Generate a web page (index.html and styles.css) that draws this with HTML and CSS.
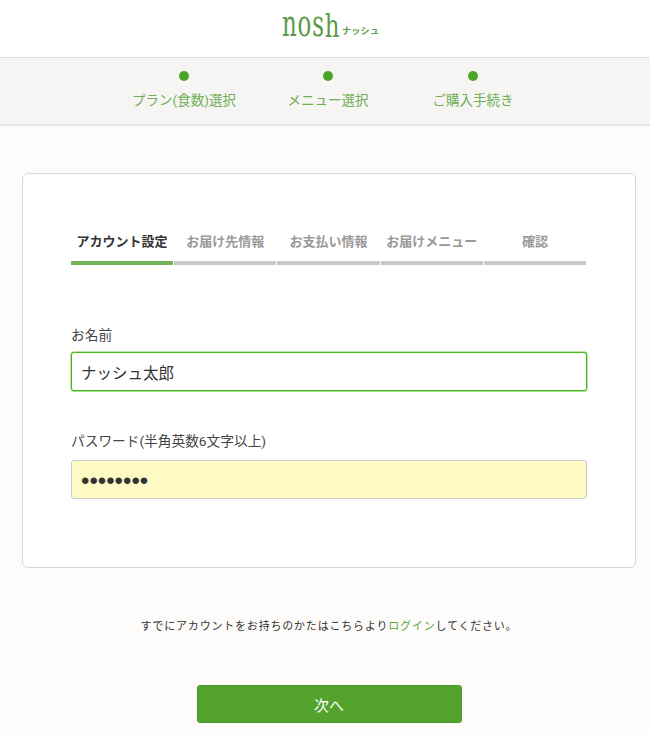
FILE: index.html
```html
<!DOCTYPE html>
<html lang="ja">
<head>
    <meta charset="utf-8">
    <title>nosh ナッシュ</title>
    <link rel="stylesheet" href="styles.css">
</head>
<body>
    <header class="site-header">
        <div class="logo">
            <span class="logo-word">nos<span class="logo-h">h</span></span>
            <span class="logo-kana">ナッシュ</span>
        </div>
    </header>

    <nav class="flow">
        <div class="flow-step flow-step-1"><span class="flow-dot"></span><span>プラン(食数)選択</span></div>
        <div class="flow-step flow-step-2"><span class="flow-dot"></span><span>メニュー選択</span></div>
        <div class="flow-step flow-step-3"><span class="flow-dot"></span><span>ご購入手続き</span></div>
    </nav>

    <main class="content">
        <section class="card">
            <ul class="tabs">
                <li class="tab active">アカウント設定</li>
                <li class="tab">お届け先情報</li>
                <li class="tab">お支払い情報</li>
                <li class="tab">お届けメニュー</li>
                <li class="tab">確認</li>
            </ul>

            <div class="field">
                <label class="field-label" for="name">お名前</label>
                <input class="field-input focused" id="name" type="text" value="ナッシュ太郎">
            </div>
            <div class="field">
                <label class="field-label field-label-tall" for="password">パスワード(半角英数6文字以上)</label>
                <input class="field-input autofilled" id="password" type="password" value="password">
            </div>
        </section>

        <p class="login-note">すでにアカウントをお持ちのかたはこちらより<a href="#">ログイン</a>してください。</p>

        <button class="next-button" type="button">次へ</button>
    </main>
</body>
</html>
```

FILE: styles.css
```css
* {
    box-sizing: border-box;
}
html, body {
    height: 735px;
    overflow: hidden;
}
body {
    margin: 0;
    background-color: #fdfcfa;
    color: #333;
    font-family: "Roboto", "Noto Sans CJK JP", sans-serif;
}
.site-header {
    height: 58px;
    background-color: #fff;
    border-bottom: 1px solid #ddd;
    display: flex;
    justify-content: center;
    padding-left: 8px;
}
.logo {
    display: flex;
    align-items: flex-start;
    width: 96px;
    height: 40px;
    color: #5a9a48;
}
.logo-word {
    display: block;
    width: 60px;
    margin: 8px 0 0 1px;
    font-family: "DejaVu Serif", serif;
    font-size: 29px;
    line-height: 30px;
    white-space: nowrap;
    letter-spacing: 1px;
    transform: scale(0.79, 1.3);
    transform-origin: left center;
}
.logo-h {
    display: inline-block;
    transform: scaleY(0.86);
    transform-origin: center bottom;
}
.logo-kana {
    margin-top: 25px;
    font-size: 9px;
    line-height: 13px;
    font-weight: 700;
    letter-spacing: 0.3px;
    white-space: nowrap;
}
.flow {
    height: 68px;
    background-color: #f6f5f3;
    border-bottom: 2px solid #e6e6e4;
    display: flex;
}
.flow-step {
    width: 130px;
    display: flex;
    flex-direction: column;
    align-items: center;
    gap: 9px;
    padding-top: 13px;
    font-size: 13.5px;
    line-height: 20px;
    color: #6eae55;
}
.flow-step-1 {
    margin-left: 119px;
}
.flow-step-2 {
    margin-left: 14px;
}
.flow-step-3 {
    margin-left: 15px;
}
.flow-dot {
    width: 10px;
    height: 10px;
    border-radius: 50%;
    background-color: #4ea32c;
}
.content {
    display: flex;
    flex-direction: column;
    align-items: center;
    padding: 47px 0 0 8px;
}
.card {
    width: 614px;
    height: 395px;
    background-color: #fff;
    border: 1px solid #d8d8d6;
    border-radius: 6px;
    padding: 49px 48px 0;
}
.tabs {
    list-style: none;
    margin: 0 1px 60px 0;
    padding: 0;
    display: flex;
    gap: 1px;
}
.tab {
    flex: 1;
    height: 42px;
    border-bottom: 4px solid #c8c8c8;
    text-align: center;
    font-size: 13px;
    font-weight: 700;
    line-height: 38px;
    color: #999;
    white-space: nowrap;
}
.tab.active {
    border-bottom-color: #72b35c;
    color: #333;
}
.field {
    margin-bottom: 40px;
}
.field-label {
    display: block;
    font-size: 13.7px;
    line-height: 20px;
    margin-bottom: 7px;
    color: #444;
}
.field-label-tall {
    margin-bottom: 9px;
}
.field-input {
    display: block;
    width: 100%;
    height: 39px;
    padding: 0 10px 0 9px;
    border: 1px solid #ccc;
    border-radius: 3px;
    font-family: inherit;
    font-size: 15.5px;
    color: #333;
    outline: none;
}
.field-input.focused {
    border-color: #46b81a;
    box-shadow: 0 1px 0 #a5e08a, 0 0 0 0.5px #6fc94c;
}
.field-input.autofilled {
    padding-top: 3px;
    background-color: #fff9c4;
    font-family: "Liberation Sans", sans-serif;
    font-size: 24px;
}
.login-note {
    margin: 49px 0 0;
    font-size: 11px;
    line-height: 20px;
    letter-spacing: 0.8px;
    color: #333;
}
.login-note a {
    color: #5aa83c;
    text-decoration: none;
}
.next-button {
    width: 265px;
    height: 38px;
    margin-top: 48px;
    background-color: #53a32e;
    border: 1px solid #4c9a29;
    border-radius: 3px;
    color: #fff;
    font-family: inherit;
    font-size: 15px;
}
```
